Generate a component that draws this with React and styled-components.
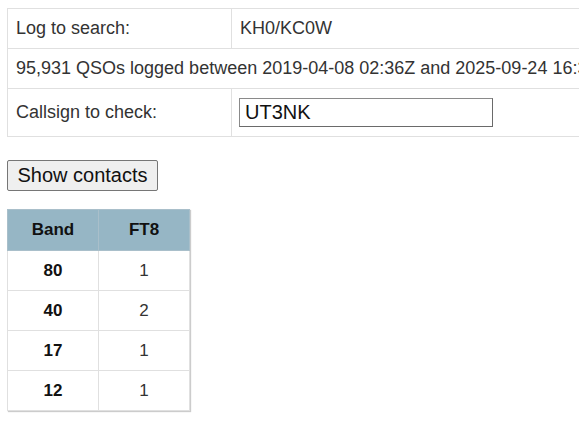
import React from "react";
import styled, { createGlobalStyle } from "styled-components";

const Global = createGlobalStyle`
  html, body { margin: 0; padding: 0; background: #fff; overflow: hidden; }
  body { font-family: "Liberation Sans", Arial, sans-serif; color: #333; }
`;

const Page = styled.div`
  padding: 8px 7px;
  display: flex;
  flex-direction: column;
  align-items: flex-start;
`;

const InfoTable = styled.table`
  border-collapse: collapse;
  font-size: 18px;
  white-space: nowrap;
`;

const InfoCell = styled.td`
  border: 1px solid #e0e0e0;
  padding: 9px 8px;
  line-height: 21px;
  width: ${(p) => (p.$label ? "207px" : "auto")};
`;

const InputCell = styled(InfoCell)`
  padding: 9px 8px 9px 7px;
`;

const CallInput = styled.input`
  width: 254px;
  height: 29px;
  box-sizing: border-box;
  font-family: "Liberation Sans", Arial, sans-serif;
  font-size: 20px;
  color: #111;
  padding: 1px 5px;
  border: 1px solid #8a8a8a;
  border-right-color: #6a6a6a;
  border-bottom-color: #6a6a6a;
  display: block;
`;

const Button = styled.button`
  margin-top: 23px;
  font-family: "Liberation Sans", Arial, sans-serif;
  font-size: 20px;
  color: #111;
  background: #efefef;
  border: 1px solid #767676;
  border-radius: 2px;
  height: 31px;
  width: 151px;
  padding: 0;
`;

const BandTable = styled.table`
  margin-top: 18px;
  border-collapse: collapse;
  font-size: 17px;
  box-shadow: 1px 1px 1px #ccc;
`;

const Head = styled.th`
  background: #96b6c5;
  border: 1px solid #a9bfca;
  width: 74px;
  height: 40px;
  padding: 0 8px;
  font-weight: bold;
  color: #111;
  text-align: center;
`;

const Cell = styled.td`
  border: 1px solid #e0e0e0;
  height: 39px;
  padding: 0 8px;
  text-align: center;
  font-weight: ${(p) => (p.$bold ? "bold" : "normal")};
  color: ${(p) => (p.$bold ? "#111" : "#333")};
`;

const rows = [
  ["80", "1"],
  ["40", "2"],
  ["17", "1"],
  ["12", "1"],
];

export default function App() {
  return (
    <>
      <Global />
      <Page>
        <InfoTable>
          <tbody>
            <tr>
              <InfoCell $label>Log to search:</InfoCell>
              <InfoCell>KH0/KC0W</InfoCell>
            </tr>
            <tr>
              <InfoCell colSpan={2}>
                95,931 QSOs logged between 2019-04-08 02:36Z and 2025-09-24 16:33Z
              </InfoCell>
            </tr>
            <tr>
              <InfoCell $label>Callsign to check:</InfoCell>
              <InputCell>
                <CallInput defaultValue="UT3NK" />
              </InputCell>
            </tr>
          </tbody>
        </InfoTable>
        <Button>Show contacts</Button>
        <BandTable>
          <thead>
            <tr>
              <Head>Band</Head>
              <Head>FT8</Head>
            </tr>
          </thead>
          <tbody>
            {rows.map(([b, n]) => (
              <tr key={b}>
                <Cell $bold>{b}</Cell>
                <Cell>{n}</Cell>
              </tr>
            ))}
          </tbody>
        </BandTable>
      </Page>
    </>
  );
}
